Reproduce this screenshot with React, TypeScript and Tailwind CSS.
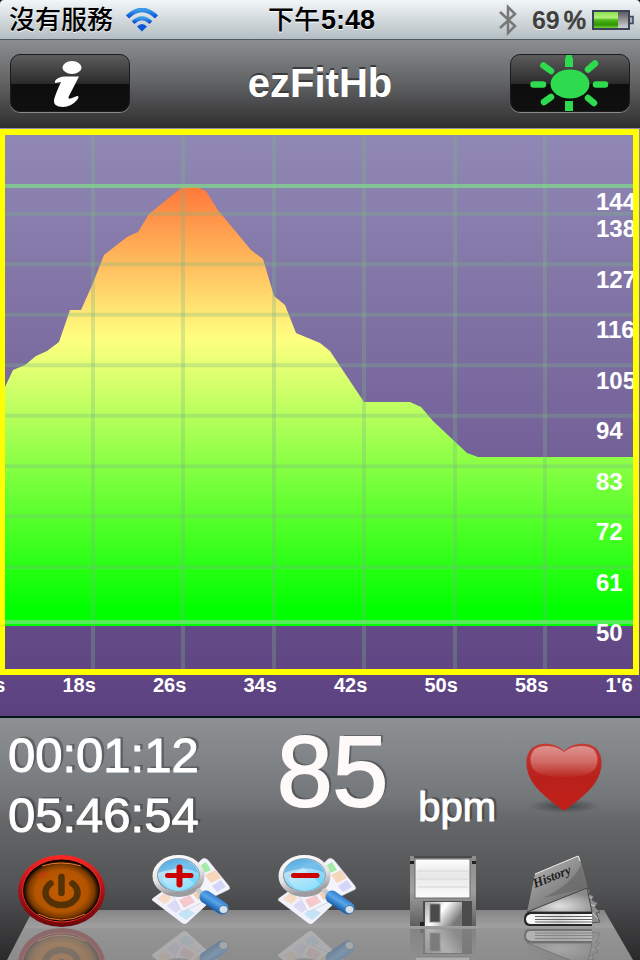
import React from 'react';

const PULSE_TICKS = [144, 138, 127, 116, 105, 94, 83, 72, 61, 50];
const TIME_TICKS = ['10s', '18s', '26s', '34s', '42s', '50s', '58s', "1'6"];
const GRID_X = [88, 178, 269, 359, 450, 540];

const PULSE_CURVE =
    '0,252 8,235 20,230 31,221 42,216 54,207 65,175 76,175 88,148 99,120 122,102 133,97 144,79 176,53 180,52 192,52 201,56 212,74 246,115 258,124 269,161 280,170 291,198 315,208 325,216 359,267 405,267 416,272 428,286 462,318 473,322 628,322 628,491 0,491';

// plot area is 534 units high, 50 bpm sits near its bottom
const PLOT_HEIGHT = 534;
const UNITS_PER_BEAT = 4.59;
const gridY = (bpm: number) => 482.6 - (bpm - 50) * UNITS_PER_BEAT;
const labelTop = (bpm: number) => `${((498 - (bpm - 50) * UNITS_PER_BEAT) / PLOT_HEIGHT) * 100}%`;

const SharedGradients: React.FC = () => (
    <svg className="absolute h-0 w-0" aria-hidden="true">
        <defs>
            <linearGradient id="pulse" gradientUnits="userSpaceOnUse" x1="0" y1="51" x2="0" y2="475">
                <stop offset="0" stopColor="#ff773a" />
                <stop offset="0.36" stopColor="#ffff80" />
                <stop offset="1" stopColor="#00ff00" />
            </linearGradient>
            <linearGradient id="wifi" x1="0" y1="0" x2="0" y2="1">
                <stop offset="0" stopColor="#3a9be6" />
                <stop offset="1" stopColor="#0b55d8" />
            </linearGradient>
            <linearGradient id="charge" x1="0" y1="0" x2="0" y2="1">
                <stop offset="0" stopColor="#8ae04c" />
                <stop offset="0.35" stopColor="#b4f07c" />
                <stop offset="0.5" stopColor="#4fb81c" />
                <stop offset="0.8" stopColor="#2f9400" />
                <stop offset="1" stopColor="#72d03c" />
            </linearGradient>
            <linearGradient id="uncharged" x1="0" y1="0" x2="0" y2="1">
                <stop offset="0" stopColor="#5c5c5c" />
                <stop offset="1" stopColor="#d0d0d0" />
            </linearGradient>
            <linearGradient id="heart" x1="0" y1="0" x2="0" y2="1">
                <stop offset="0" stopColor="#c43c36" />
                <stop offset="0.5" stopColor="#b9201b" />
                <stop offset="1" stopColor="#c12019" />
            </linearGradient>
            <linearGradient id="heartGloss" x1="0" y1="0" x2="0" y2="1">
                <stop offset="0" stopColor="#fff" stopOpacity="0.45" />
                <stop offset="0.5" stopColor="#fff" stopOpacity="0.3" />
                <stop offset="1" stopColor="#fff" stopOpacity="0.03" />
            </linearGradient>
            <radialGradient id="heartShadow">
                <stop offset="0" stopColor="#000" stopOpacity="0.4" />
                <stop offset="1" stopColor="#000" stopOpacity="0" />
            </radialGradient>
            <linearGradient id="ring" x1="0" y1="0" x2="0" y2="1">
                <stop offset="0" stopColor="#ff2624" />
                <stop offset="0.5" stopColor="#a81218" />
                <stop offset="1" stopColor="#6c070a" />
            </linearGradient>
            <radialGradient id="ember">
                <stop offset="0" stopColor="#c45c00" />
                <stop offset="0.7" stopColor="#b35400" />
                <stop offset="0.88" stopColor="#7a3a00" />
                <stop offset="1" stopColor="#1a0a00" />
            </radialGradient>
            <linearGradient id="lens" x1="0" y1="0" x2="0.4" y2="1">
                <stop offset="0" stopColor="#52b0e8" />
                <stop offset="0.4" stopColor="#b9e2f6" />
                <stop offset="1" stopColor="#66d2fb" />
            </linearGradient>
            <linearGradient id="rim" x1="0" y1="0" x2="0.3" y2="1">
                <stop offset="0" stopColor="#ffffff" />
                <stop offset="0.6" stopColor="#e4e4e6" />
                <stop offset="1" stopColor="#9c9ca0" />
            </linearGradient>
            <linearGradient id="handle" gradientUnits="userSpaceOnUse" x1="66" y1="39" x2="57" y2="53">
                <stop offset="0" stopColor="#1f6cc4" />
                <stop offset="0.5" stopColor="#5aa6ea" />
                <stop offset="1" stopColor="#0c54a4" />
            </linearGradient>
            <linearGradient id="disk" x1="0" y1="0" x2="0" y2="1">
                <stop offset="0" stopColor="#8c8c8c" />
                <stop offset="0.5" stopColor="#a0a0a0" />
                <stop offset="1" stopColor="#5e5e5e" />
            </linearGradient>
            <linearGradient id="diskLabel" x1="0" y1="0" x2="0" y2="1">
                <stop offset="0" stopColor="#ffffff" />
                <stop offset="0.4" stopColor="#e8e8e8" />
                <stop offset="1" stopColor="#fbfbfb" />
            </linearGradient>
            <linearGradient id="shutter" x1="0" y1="0" x2="1" y2="0.5">
                <stop offset="0" stopColor="#a8a8a8" />
                <stop offset="0.5" stopColor="#ffffff" />
                <stop offset="1" stopColor="#777777" />
            </linearGradient>
            <linearGradient id="cover" x1="0" y1="0" x2="0.8" y2="1">
                <stop offset="0" stopColor="#bdbdbd" />
                <stop offset="0.5" stopColor="#8f8f8f" />
                <stop offset="1" stopColor="#666666" />
            </linearGradient>
            <radialGradient id="flap" cx="0.5" cy="0.75" r="0.6">
                <stop offset="0" stopColor="#e2e2e2" />
                <stop offset="1" stopColor="#8a8a8a" />
            </radialGradient>
            <linearGradient id="pages" x1="0" y1="0" x2="1" y2="0">
                <stop offset="0" stopColor="#ffffff" />
                <stop offset="0.5" stopColor="#d8d8d8" />
                <stop offset="1" stopColor="#ffffff" />
            </linearGradient>
        </defs>
    </svg>
);

const StatusBar: React.FC = () => (
    <div className="bg-black">
        <div className="grid h-10 grid-cols-[1fr_auto_1fr] items-center rounded-t-[4px] border-b border-[#4f5c60] bg-linear-to-b from-[#f2f6f9] to-[#b4bec2] pr-[6px] pl-[9px] text-[26px] leading-10 text-black [text-shadow:0_1px_0_#fff]">
            <div className="flex items-center gap-[13px] font-medium">
                <span>沒有服務</span>
                <svg className="h-6 w-8" viewBox="0 0 32 24" fill="none" stroke="url(#wifi)" aria-hidden="true">
                    <path d="M1.500 9 Q16 -5 30.500 9" strokeWidth="4.500" />
                    <path d="M7 14.500 Q16 6 25 14.500" strokeWidth="4" />
                    <path d="M11 18.500 Q16 13.500 21 18.500 L16 23.500Z" fill="#0b55d8" stroke="none" />
                </svg>
            </div>
            <div className="flex items-center gap-px">
                <span className="font-medium">下午</span>
                <span className="text-[27px] font-bold">5:48</span>
            </div>
            <div className="flex items-center justify-end gap-[6px] text-[#404040]">
                <svg className="mr-2 h-8 w-5" viewBox="0 0 20 32" fill="none" stroke="#777" strokeWidth="2.500" aria-hidden="true">
                    <path d="M2 8 L17 22 L10 29 L10 3 L17 10 L2 24" />
                </svg>
                <span className="flex gap-1 text-[25px] font-bold">
                    <span>69</span>
                    <span className="font-normal [-webkit-text-stroke:1px_#404040]">%</span>
                </span>
                <svg className="h-5 w-[42px]" viewBox="0 0 42 20" aria-hidden="true">
                    <rect x="1" y="1" width="36" height="18" fill="#dfe4e8" stroke="#3c4258" strokeWidth="2" />
                    <rect x="2" y="2" width="24" height="16" fill="url(#charge)" />
                    <rect x="26" y="2" width="10" height="16" fill="url(#uncharged)" />
                    <path d="M38 6.500 h3 v7 h-3" fill="#aab0ba" stroke="#3c4258" strokeWidth="1.500" />
                </svg>
            </div>
        </div>
    </div>
);

interface BarButtonProps {
    label: string;
    children: React.ReactNode;
}

const BarButton: React.FC<BarButtonProps> = ({ label, children }) => (
    <button
        aria-label={label}
        className="h-[58px] w-[120px] overflow-hidden rounded-[10px] border border-[#1c1c1c] bg-[linear-gradient(#5c5c5c_0%,#2b2b2b_51%,#0d0d0d_52%,#101010_100%)] shadow-[0_1px_0_#8a8a8a]"
    >
        {children}
    </button>
);

const Header: React.FC = () => (
    <header className="flex h-22 items-center justify-between bg-linear-to-b from-[#8b8f91] via-[#606163] to-[#2f2f2f] px-[10px] pb-[2px]">
        <BarButton label="Info">
            <svg className="h-full w-full" viewBox="1 1 118 56" fill="#fff">
                <ellipse cx="62" cy="13.500" rx="9.500" ry="6.500" />
                <path d="M45 27 Q48 22.500 55 22.500 L69 22.500 L58.500 43 Q58 46 62 44 L67 42 Q70 42 67 46 Q61 53 53 53 Q43 53 44 46 Q45 41 51 28 L45 29Z" />
            </svg>
        </BarButton>
        <h1 className="text-[40px] leading-10 font-bold text-white [text-shadow:0_-2px_0_#3c3c3c]">ezFitHb</h1>
        <BarButton label="Brightness">
            <svg className="h-full w-full" viewBox="1 1 118 56" fill="#2edb4e" stroke="#2edb4e" strokeWidth="6.500">
                <ellipse cx="60" cy="30" rx="19.500" ry="14.500" stroke="none" />
                <path d="M59 4V13M59 47V57" strokeWidth="8" />
                <path
                    d="M59 3.500V8M23.500 30.500H33M86 30.500H95M33.500 11.500L41 17M85 9.500L78 15.500M34 48L41 43M78 44L84 49"
                    strokeLinecap="round"
                />
            </svg>
        </BarButton>
    </header>
);

const PulseChart: React.FC = () => (
    <main className="flex flex-1 flex-col overflow-hidden bg-linear-to-b from-[#9189b5] to-[#5c4180] pt-px font-bold text-white">
        <div className="relative mr-px flex-1 overflow-hidden border-y-6 border-r-6 border-l-5 border-[#ffff00]">
            <svg className="absolute inset-0 h-full w-full" viewBox="0 0 628 534" preserveAspectRatio="none" role="img" aria-label="Heart rate">
                <polygon points={PULSE_CURVE} fill="url(#pulse)" />
                <g stroke="#7cb585" strokeWidth="4" strokeOpacity="0.3">
                    {PULSE_TICKS.slice(1, -1).map((bpm) => (
                        <path key={bpm} d={`M0 ${gridY(bpm)}H628`} />
                    ))}
                    {GRID_X.map((x) => (
                        <path key={x} d={`M${x} 0V534`} />
                    ))}
                </g>
                <path d="M0 51H628M0 487H628" stroke="#7fe186" strokeWidth="4" strokeOpacity="0.67" />
            </svg>
            <div className="absolute inset-y-0 right-0 w-[37px]">
                {PULSE_TICKS.map((bpm) => (
                    <span key={bpm} className="absolute left-0 -translate-y-1/2 text-2xl leading-6" style={{ top: labelTop(bpm) }}>
                        {bpm}
                    </span>
                ))}
            </div>
        </div>
        <div className="-ml-7 grid h-[41px] w-[calc(100%+84px)] grid-cols-8 text-xl leading-5">
            {TIME_TICKS.map((tick) => (
                <span key={tick}>{tick}</span>
            ))}
        </div>
    </main>
);

const Heart: React.FC = () => (
    <svg className="mt-6 h-[72px] w-[76px]" viewBox="0 0 76 72" aria-hidden="true">
        <ellipse cx="38" cy="64" rx="36" ry="7" fill="url(#heartShadow)" />
        <path
            d="M38 9 C31 1 14 -1 6 6 C-3 15 0 31 7 41 C14 52 29 62 38 69 C47 62 62 52 69 41 C76 31 79 15 70 6 C62 -1 45 1 38 9Z"
            fill="url(#heart)"
        />
        <path
            d="M38 10 C31 3 15 2 9 7 C2 14 4 24 9 29 C20 37 56 37 67 29 C72 24 74 14 67 7 C61 2 45 3 38 10Z"
            fill="url(#heartGloss)"
        />
    </svg>
);

const Readout: React.FC = () => (
    <div className="flex h-[137px] items-start justify-between pr-[38px] pl-2 text-white [text-shadow:3px_-2px_0_rgba(0,0,0,0.28)]">
        <div className="mt-[7px] text-[49px] leading-[60px] [-webkit-text-stroke:1px_#fff]">
            <p>00:01:12</p>
            <p>05:46:54</p>
        </div>
        <div className="flex items-start gap-[30px]">
            <span className="mt-[3px] text-[100px] leading-[100px] text-[#fffafa] [-webkit-text-stroke:2px_#fffafa]">85</span>
            <span className="mt-[69px] text-[40px] leading-10 [-webkit-text-stroke:1px_#fff]">bpm</span>
            <Heart />
        </div>
    </div>
);

interface ToolIconProps {
    mirrored?: boolean;
}

const PowerIcon: React.FC<ToolIconProps> = () => (
    <svg className="h-18 w-[87px]" viewBox="0 0 87 72" fill="none">
        <ellipse cx="43.500" cy="36" rx="43.500" ry="36" fill="url(#ring)" />
        <ellipse cx="43.500" cy="35.500" rx="39" ry="31.500" fill="#100400" stroke="#e83024" strokeWidth="1" />
        <ellipse cx="43.500" cy="36" rx="37.500" ry="30" fill="url(#ember)" />
        <path d="M24 11 Q43 5 63 11M20 59 Q43 71 67 59" stroke="#f0752c" strokeWidth="1" />
        <path d="M19 21 Q24 15 30 17 Q29 22 22 24Z" fill="#c03a10" opacity="0.7" />
        <path d="M32.500 28.500 A16 12.500 0 1 0 54.500 28.500" stroke="#553106" strokeWidth="6.500" strokeLinecap="round" />
        <path d="M43.500 22V38" stroke="#553106" strokeWidth="6.500" strokeLinecap="round" />
    </svg>
);

const MagnifierIcon: React.FC<ToolIconProps & { plus?: boolean }> = ({ plus }) => (
    <svg className="h-18 w-[79px]" viewBox="0 0 79 72">
        <path d="M1 43 L15 33 L60 45 L35 68 Q33 70 30 68 L1 46 Q-1 45 1 43Z" fill="#f1f1fb" />
        <path d="M5 44L12 38L20 43L13 49Z" fill="#f6dcc4" />
        <path d="M15 51L22 45L31 51L24 58Z" fill="#dcdbf6" />
        <path d="M26 59L34 53L43 58L34 65Z" fill="#c4e4f6" />
        <path d="M19 36 L50 4 Q53 2 56 5 L77 31 Q79 34 76 35 L32 56 Q29 57 28 54Z" fill="#f4f4fd" stroke="#bdbdc8" strokeWidth="0.500" />
        <path d="M49 10L54 7L59 15L52 18Z" fill="#a5eba8" />
        <path d="M53 20L63 15L69 23L59 28Z" fill="#f6d6ba" />
        <path d="M60 31L69 25L74 32L65 37Z" fill="#d5d5f7" />
        <path d="M27 45L38 40L43 47L32 53Z" fill="#f6cacc" />
        <path d="M41 39L47 36L52 42L46 45Z" fill="#f4cfae" />
        <ellipse cx="26.500" cy="21" rx="23.500" ry="18.500" fill="none" stroke="url(#rim)" strokeWidth="5" />
        <ellipse cx="26.500" cy="20" rx="21" ry="16.500" fill="url(#lens)" stroke="#8b9098" strokeWidth="0.800" />
        <path d="M6 18 Q10 4 27 4 Q43 5 46 18 Q32 9 6 18Z" fill="#2d96dc" opacity="0.45" />
        <path d="M10 24 L25 12 L42 29 Q34 36 26 36 Q15 35 10 24Z" fill="#fff" opacity="0.3" />
        <path d="M45 34L51 40" stroke="#c9c9c9" strokeWidth="5" />
        <path d="M54 42L70 53" stroke="url(#handle)" strokeWidth="13" strokeLinecap="round" />
        <ellipse cx="71.500" cy="54.500" rx="4.500" ry="4" fill="#d8e0ea" stroke="#436f9e" strokeWidth="1" />
        <path d="M15.500 20.500H39" stroke="#cc0000" strokeWidth="5" strokeLinecap="round" />
        {plus && <path d="M27.500 12.500V29.500" stroke="#cc0000" strokeWidth="6" strokeLinecap="round" />}
    </svg>
);

const ZoomInIcon: React.FC<ToolIconProps> = () => <MagnifierIcon plus />;

const DiskIcon: React.FC<ToolIconProps> = () => (
    <svg className="h-18 w-18" viewBox="0 0 72 72">
        <rect x="6" y="1" width="66" height="70" fill="url(#disk)" />
        <path d="M10 2H68" stroke="#4a4a4a" strokeWidth="2" />
        <path d="M6 7.500H10M68 7.500H72" stroke="#222" strokeWidth="3" />
        <rect x="11" y="4" width="55" height="39" fill="url(#diskLabel)" stroke="#6c6c6c" strokeWidth="1" />
        <path d="M13 16H64M13 24H64M13 32H64" stroke="#d4d4d4" strokeWidth="1" />
        <rect x="19" y="46" width="49" height="25" fill="#4c4c4c" />
        <rect x="21" y="47" width="37" height="24" fill="url(#shutter)" />
        <rect x="26" y="49" width="10" height="18" fill="#4a4a4a" stroke="#888" strokeWidth="1" />
        <path d="M16 69H20" stroke="#222" strokeWidth="4" />
    </svg>
);

const HistoryIcon: React.FC<ToolIconProps> = ({ mirrored }) => (
    <svg className="h-18 w-[78px]" viewBox="0 0 78 72">
        <path d="M61 33L67 35L66 39L71 41L69 45L75 48L72 52L77 57L73 58L77 67L68 68Z" fill="#8c8c8c" stroke="#555" strokeWidth="1" />
        <path d="M63 40L69 43M66 49L72 51M70 58L75 64" stroke="#ccc" strokeWidth="1" />
        <path d="M12 19 L55 1 Q57 1 57 4 L65 34 L4 57Z" fill="url(#cover)" />
        <path d="M12 19 L55 1 L57 6" fill="none" stroke="#ededed" strokeWidth="1" />
        <path d="M58 10 Q48 30 20 43 L64 33Z" fill="#686868" opacity="0.7" />
        <path d="M4 57 L64 33 L69 57Z" fill="url(#flap)" stroke="#444" strokeWidth="1" />
        {!mirrored && (
            <text x="12" y="33" transform="rotate(-22 12 33)" fontFamily="Liberation Serif, serif" fontSize="13" fontStyle="italic" fontWeight="bold" fill="#1d1d1d">
                History
            </text>
        )}
        <path d="M69 57H6Q1 58 1 64Q1 71 6 71H69Z" fill="#262626" />
        <path d="M69 59H8Q3 60 3 64Q3 69 8 69H69Z" fill="url(#pages)" />
        <path d="M12 61.500H69M12 64.500H69M12 67H69" stroke="#666" strokeWidth="1" />
    </svg>
);

const TOOLS = [
    { label: 'Power', Icon: PowerIcon },
    { label: 'Zoom in', Icon: ZoomInIcon },
    { label: 'Zoom out', Icon: MagnifierIcon },
    { label: 'Save', Icon: DiskIcon },
    { label: 'History', Icon: HistoryIcon },
];

const Dock: React.FC = () => (
    <div className="relative">
        <div className="absolute inset-x-0 bottom-0 h-[50px] bg-[linear-gradient(#858585_0%,#a0a0a0_34%,#959595_38%,#8c8c8c_100%)] [clip-path:polygon(33px_0,calc(100%-36px)_0,calc(100%-7px)_100%,7px_100%)]" />
        <div className="relative flex justify-between pr-[39px] pl-[18px]">
            {TOOLS.map(({ label, Icon }) => (
                <button key={label} aria-label={label}>
                    <Icon />
                    <div className="mt-px h-8 overflow-hidden opacity-30" aria-hidden="true">
                        <div className="-scale-y-100">
                            <Icon mirrored />
                        </div>
                    </div>
                </button>
            ))}
        </div>
    </div>
);

const App: React.FC = () => {
    return (
        <div className="flex min-h-screen flex-col overflow-hidden font-['Liberation_Sans','Noto_Sans_CJK_TC',sans-serif]">
            <SharedGradients />
            <StatusBar />
            <Header />
            <PulseChart />
            <footer className="border-t-2 border-[#06141c] bg-[linear-gradient(#8d9193_0%,#75787b_32%,#666769_42%,#525355_70%,#2a2a2b_100%)]">
                <Readout />
                <Dock />
            </footer>
        </div>
    );
};

export default App;
